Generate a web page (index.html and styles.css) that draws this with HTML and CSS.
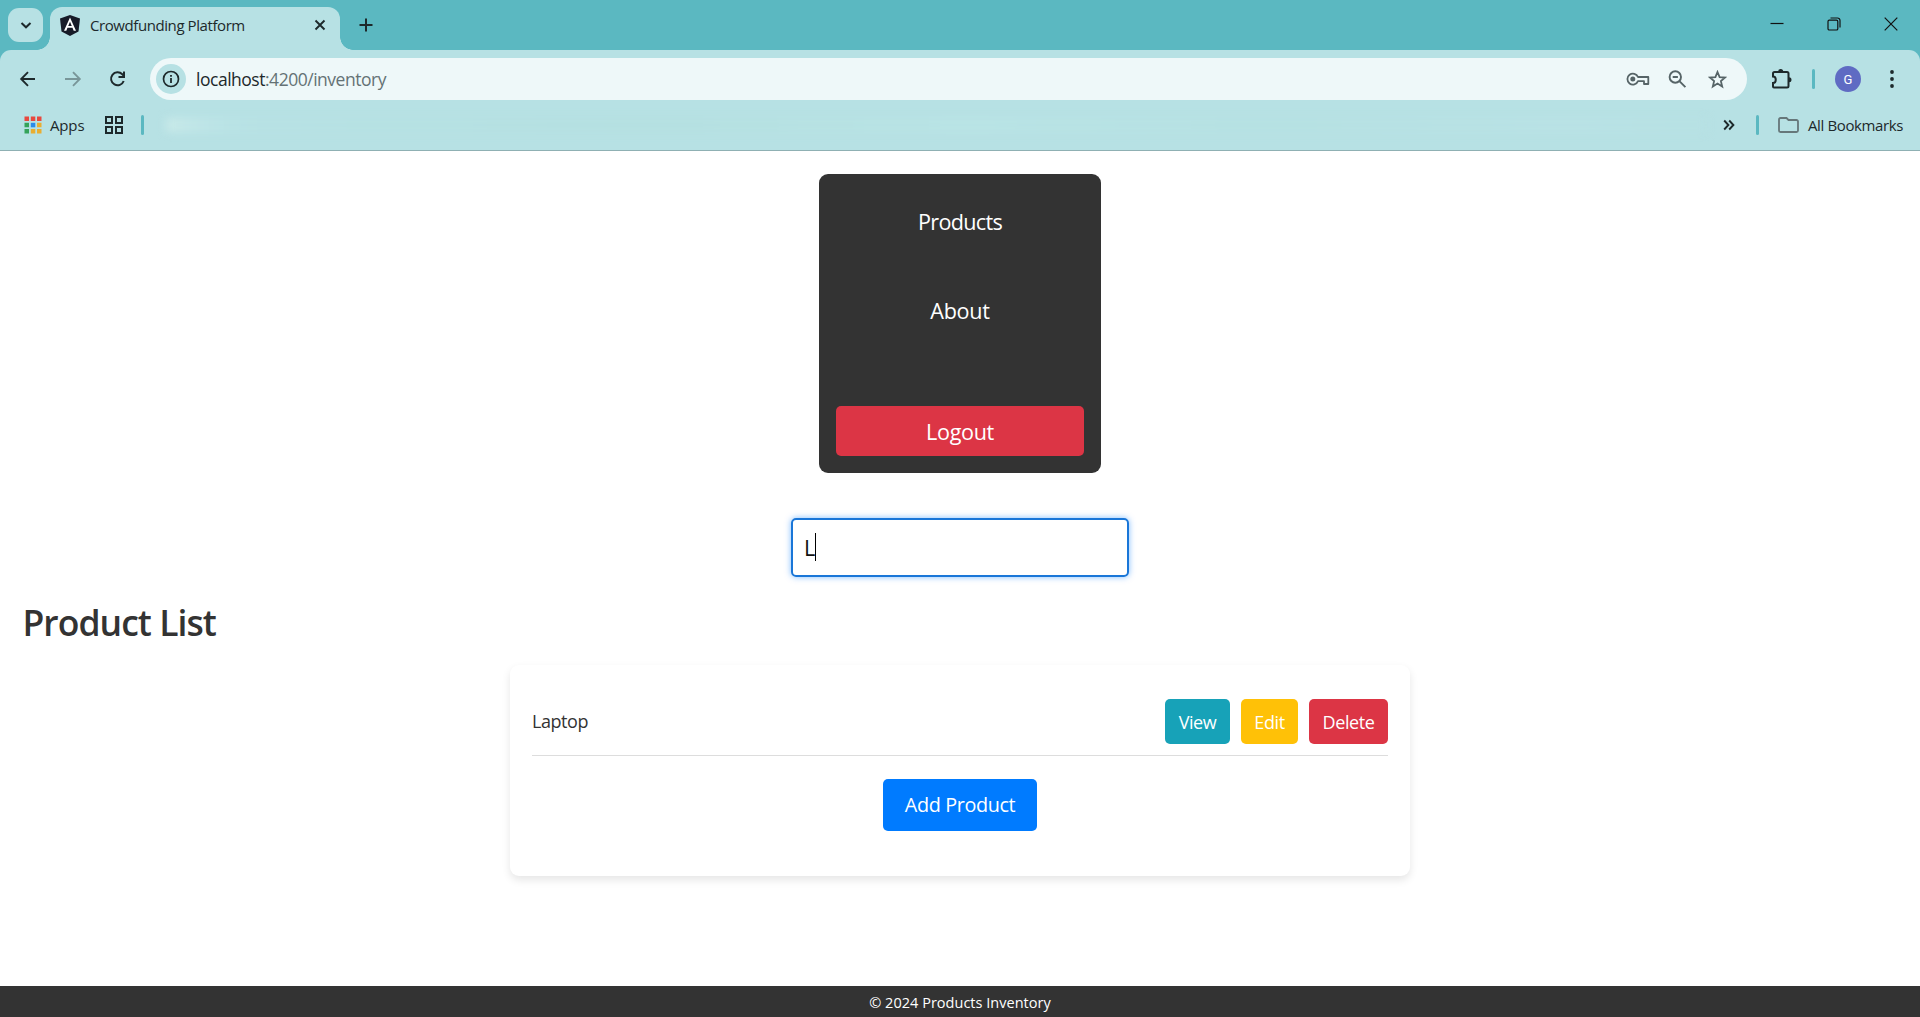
FILE: index.html
```
<!DOCTYPE html>
<html lang="en">
<head>
<meta charset="utf-8">
<title>Crowdfunding Platform</title>
<link rel="stylesheet" href="styles.css">
</head>
<body>
<header class="browser">
  <div class="tabstrip">
    <div class="tab-search"><svg width="12" height="12" viewBox="0 0 12 12"><path d="M1.500 4L6 8.300 10.500 4" fill="none" stroke="#1d292b" stroke-width="2"/></svg></div>
    <div class="tab">
      <svg class="logo" width="20" height="21" viewBox="0 0 20 21"><path d="M10 0l10 3.500-1.500 13L10 21l-8.500-4.500L0 3.500z" fill="#171b28"/><path d="M10 2.500L4 15.800h2.300l1.200-3h5l1.200 3H16zM10 6.800l1.800 4.200H8.200z" fill="#fff" fill-rule="evenodd"/></svg>
      <span class="tab-title">Crowdfunding Platform</span>
      <svg width="12" height="12" viewBox="0 0 12 12"><path d="M1.500 1.500l9 9M10.500 1.500l-9 9" stroke="#1d292b" stroke-width="1.900"/></svg>
    </div>
    <svg class="new-tab" width="14" height="14" viewBox="0 0 14 14"><path d="M7 .5v13M.5 7h13" stroke="#1d292b" stroke-width="2"/></svg>
    <div class="window-controls">
      <svg width="14" height="14" viewBox="0 0 14 14"><path d="M.5 6.500h13" stroke="#111" stroke-width="1.200"/></svg>
      <svg width="14" height="14" viewBox="0 0 14 14"><rect x="1" y="3.200" width="9.800" height="9.800" rx="1.300" fill="none" stroke="#111" stroke-width="1.200"/><path d="M3.500 1h7a2.500 2.500 0 0 1 2.500 2.500v7" fill="none" stroke="#111" stroke-width="1.200"/></svg>
      <svg width="14" height="14" viewBox="0 0 14 14"><path d="M.7.7l12.600 12.600M13.300.7L.7 13.300" stroke="#111" stroke-width="1.200"/></svg>
    </div>
  </div>
  <div class="toolbar">
    <svg width="18" height="18" viewBox="0 0 18 18"><path d="M16 9H3M9 2.200L2.200 9 9 15.800" fill="none" stroke="#1d292b" stroke-width="1.900"/></svg>
    <svg class="dim" width="18" height="18" viewBox="0 0 18 18"><path d="M1 9h14M9 2.200L15.800 9 9 15.800" fill="none" stroke="#1d292b" stroke-width="1.900"/></svg>
    <svg width="18" height="18" viewBox="0 0 18 18"><path d="M14.700 11A6.500 6.500 0 1 1 13.300 4.300L15 6" fill="none" stroke="#1d292b" stroke-width="2"/><path d="M16 1.500V8H9.500V6H14V1.500z" fill="#1d292b"/></svg>
    <div class="omnibox">
      <span class="info"><svg width="18" height="18" viewBox="0 0 18 18"><circle cx="9" cy="9" r="7.500" fill="none" stroke="#1d292b" stroke-width="1.700"/><path d="M9 8v5M9 5v1.800" stroke="#1d292b" stroke-width="1.800"/></svg></span>
      <span class="url"><span class="host">localhost</span>:4200/inventory</span>
      <svg width="24" height="16" viewBox="0 0 24 16"><path d="M12 6H22.300v7H18v-2.800h-6A5.500 5.500 0 1 1 12 6z" fill="none" stroke="#566467" stroke-width="1.800" stroke-linejoin="round"/><circle cx="6.800" cy="8" r="2.500" fill="#566467"/></svg>
      <svg class="lens" width="19" height="19" viewBox="0 0 19 19"><circle cx="7.300" cy="7" r="5.700" fill="none" stroke="#566467" stroke-width="1.900"/><path d="M4.700 7h5.200M11.400 11.100l6 6" stroke="#566467" stroke-width="1.900"/></svg>
      <svg width="19" height="19" viewBox="0 0 19 19"><path d="M9.500 2l2.100 5.100 5.500.4-4.200 3.600 1.300 5.400-4.700-2.900-4.700 2.900 1.300-5.400L1.900 7.500l5.500-.4z" fill="none" stroke="#566467" stroke-width="1.800"/></svg>
    </div>
    <svg class="puzzle" width="22" height="22" viewBox="0 0 22 22"><path d="M3.500 4H16a1.500 1.500 0 0 1 1.500 1.500V18a1.500 1.500 0 0 1-1.500 1.500H3A1 1 0 0 1 2 18.500V15c3.700 0 3.700-6.500 0-6.500v-3A1.500 1.500 0 0 1 3.500 4z" fill="none" stroke="#1d292b" stroke-width="2"/><path d="M7.200 3.500a2.500 2.500 0 0 1 5 0zM18 9.300a2.500 2.500 0 0 1 0 5z" fill="#1d292b"/></svg>
    <i class="bar bar-tool"></i>
    <span class="avatar">G</span>
    <svg class="menu" width="4" height="20" viewBox="0 0 4 20"><circle cx="2" cy="3" r="1.900" fill="#1d292b"/><circle cx="2" cy="10" r="1.900" fill="#1d292b"/><circle cx="2" cy="17" r="1.900" fill="#1d292b"/></svg>
  </div>
  <div class="bookmarks">
    <svg width="18" height="18" viewBox="0 0 18 18"><path d="M.5.500H5V5H.5zM6.800.500h4.500V5H6.800zM13 .5h4.500V5H13z" fill="#e8483e"/><path d="M.5 6.800H5v4.500H.5zM.5 13H5v4.500H.5z" fill="#35a35a"/><path d="M6.800 6.800h4.500v4.500H6.800z" fill="#2a8bea"/><path d="M13 6.800h4.500v4.500H13zM6.800 13h4.500v4.500H6.800zM13 13h4.500v4.500H13z" fill="#e9ae31"/></svg>
    <span class="apps">Apps</span>
    <svg width="18" height="18" viewBox="0 0 18 18"><path d="M1 1h6v6H1zM11 1h6v6h-6zM1 11h6v6H1zM11 11h6v6h-6z" fill="none" stroke="#1d292b" stroke-width="2"/></svg>
    <i class="bar bar-left"></i>
    <i class="smudge"></i>
    <svg width="12" height="12" viewBox="0 0 12 12"><path d="M1.200 1.500L5.400 6l-4.200 4.500M6.200 1.500L10.400 6l-4.200 4.500" fill="none" stroke="#1d292b" stroke-width="1.900"/></svg>
    <i class="bar bar-right"></i>
    <svg width="21" height="16" viewBox="0 0 21 16"><path d="M1 2.500v11A1.500 1.500 0 0 0 2.500 15h16a1.500 1.500 0 0 0 1.500-1.500v-9A1.500 1.500 0 0 0 18.500 3H10.500L8.500 1h-6A1.500 1.500 0 0 0 1 2.500z" fill="none" stroke="#66777a" stroke-width="1.800"/></svg>
    <span class="all">All Bookmarks</span>
  </div>
</header>
<main class="page">
  <nav class="nav">
    <a class="link products">Products</a>
    <a class="link about">About</a>
    <button class="logout">Logout</button>
  </nav>
  <div class="search">L<i class="caret"></i></div>
  <h1 class="title">Product List</h1>
  <section class="card">
    <div class="row">
      <span class="name">Laptop</span>
      <button class="btn view">View</button>
      <button class="btn edit">Edit</button>
      <button class="btn delete">Delete</button>
    </div>
    <button class="add">Add Product</button>
  </section>
</main>
<footer class="footer">© 2024 Products Inventory</footer>
</body>
</html>
```
FILE: styles.css
```
* { box-sizing: border-box; }
body { margin: 0; height: 1017px; display: flex; flex-direction: column; background: #fff; color: #333; font-family: "Open Sans", "Noto Sans", sans-serif; overflow: hidden; }
svg { display: block; flex: none; }
button { display: block; flex: none; border: 0; padding: 0; color: #fff; font-family: inherit; }

.browser { height: 151px; flex: none; background: #5bb8c1; border-bottom: 1px solid #8fb0b3; color: #1d292b; }
.tabstrip { height: 50px; display: flex; align-items: flex-start; }
.tab-search { width: 35px; height: 34px; margin: 8px 0 0 8px; border-radius: 11px; background: #b7e1e4; display: grid; place-items: center; }
.tab { position: relative; width: 290px; height: 43px; margin: 7px 0 0 7px; padding: 0 14px 7px 10px; border-radius: 12px 12px 0 0; background: #b7e1e4; display: flex; align-items: center; }
.tab::before, .tab::after { content: ""; position: absolute; bottom: 0; width: 13px; height: 13px; }
.tab::before { left: -13px; background: radial-gradient(circle at 0 0, transparent 12.500px, #b7e1e4 13px); }
.tab::after { right: -13px; background: radial-gradient(circle at 100% 0, transparent 12.500px, #b7e1e4 13px); }
.tab-title { flex: 1; margin-left: 10px; font-size: 15px; letter-spacing: -.42px; }
.new-tab { margin: 18px 0 0 19px; }
.window-controls { margin: 17px 22px 0 auto; display: flex; gap: 43px; }

.toolbar { height: 58px; display: flex; align-items: center; padding-left: 19px; gap: 27px; background: #b7e1e4; border-radius: 11px 11px 0 0; }
.dim { opacity: .4; }
.omnibox { width: 1597px; flex: none; height: 42px; margin-left: -4px; border-radius: 21px; background: #eef8f9; display: flex; align-items: center; padding: 0 20px 0 6px; }
.info { width: 30px; height: 30px; border-radius: 50%; background: #b7e1e4; display: grid; place-items: center; }
.url { flex: 1; margin-left: 10px; font-size: 17.500px; letter-spacing: -.48px; color: #647275; }
.host { color: #1d292b; }
.lens { margin: 0 21px 0 18px; }
.puzzle { margin-left: -3px; }
.bar { width: 3px; height: 20px; flex: none; border-radius: 1.500px; background: #5bb8c1; }
.bar-tool { margin-left: -8px; }
.avatar { width: 26px; height: 26px; margin-left: -7px; border-radius: 50%; background: #5f6bc3; color: #fff; display: grid; place-items: center; font: 13px Roboto, sans-serif; }
.menu { margin-left: 2px; }

.bookmarks { height: 42px; display: flex; align-items: center; padding: 0 16px 8px 24px; background: #b7e1e4; font-size: 15px; }
.apps { width: 55px; margin-left: 8px; letter-spacing: -.15px; }
.bar-left { margin-left: 18px; }
.smudge { flex: 1; height: 14px; margin: 0 16px 0 22px; background: linear-gradient(90deg, #c9eae9 0, #bfe5e7 35px, #b9e3e5 65px, #b7e1e4 100px, #b6e1e3 260px, #b5e0e1 500px, #b9e4e5 800px, #b6e1e3 1100px, #b9e2e5 1400px, #b7e1e4); filter: blur(4px); }
.bar-right { margin: 0 19px 0 21px; }
.all { width: 96px; margin-left: 9px; letter-spacing: -.38px; white-space: nowrap; }

.page { flex: 1; min-height: 0; padding: 23px 22.500px 0; display: flex; flex-direction: column; align-items: center; }
.nav { width: 282px; height: 299px; flex: none; padding: 3px 17px 17px; border-radius: 9px; background: #333; display: flex; flex-direction: column; font-size: 21.600px; color: #fff; }
.link { height: 89px; line-height: 89px; text-align: center; }
.products { letter-spacing: -.7px; }
.about { letter-spacing: -.3px; }
.logout { height: 50px; margin-top: auto; border-radius: 5px; background: #dc3545; font-size: 21.600px; letter-spacing: -.35px; line-height: 51px; }
.search { width: 338px; height: 59px; flex: none; margin-top: 45px; padding-left: 11px; border: 2px solid #1976d8; border-radius: 5px; box-shadow: 0 0 6px rgba(0, 123, 255, .5); display: flex; align-items: center; font-size: 21.600px; color: #111; }
.caret { width: 1px; height: 28px; margin: -1px 0 0 -.300px; background: #000; }
.title { align-self: stretch; height: 50px; flex: none; margin: 20px 0 0; line-height: 51px; font-size: 35.500px; font-weight: 600; letter-spacing: -.96px; }
.card { width: 900px; height: 211px; flex: none; margin-top: 18px; padding: 22px; border-radius: 9px; box-shadow: 0 4px 9px rgba(0, 0, 0, .1); display: flex; flex-direction: column; align-items: center; }
.row { align-self: stretch; height: 69px; display: flex; align-items: flex-start; padding-top: 12px; border-bottom: 1px solid #ddd; gap: 11px; }
.name { flex: 1; line-height: 45px; font-size: 18px; letter-spacing: -.45px; }
.btn { height: 45px; border-radius: 5px; font-size: 18px; letter-spacing: -.4px; line-height: 44px; }
.view { width: 65px; background: #17a2b8; }
.edit { width: 57px; background: #ffc107; }
.delete { width: 79px; background: #dc3545; }
.add { width: 154px; height: 52px; margin-top: 23px; border-radius: 5px; background: #007bff; font-size: 19.800px; letter-spacing: -.38px; line-height: 50px; }
.footer { height: 31px; flex: none; line-height: 33px; background: #333; color: #fff; font-size: 14.500px; letter-spacing: .02px; text-align: center; }
```
